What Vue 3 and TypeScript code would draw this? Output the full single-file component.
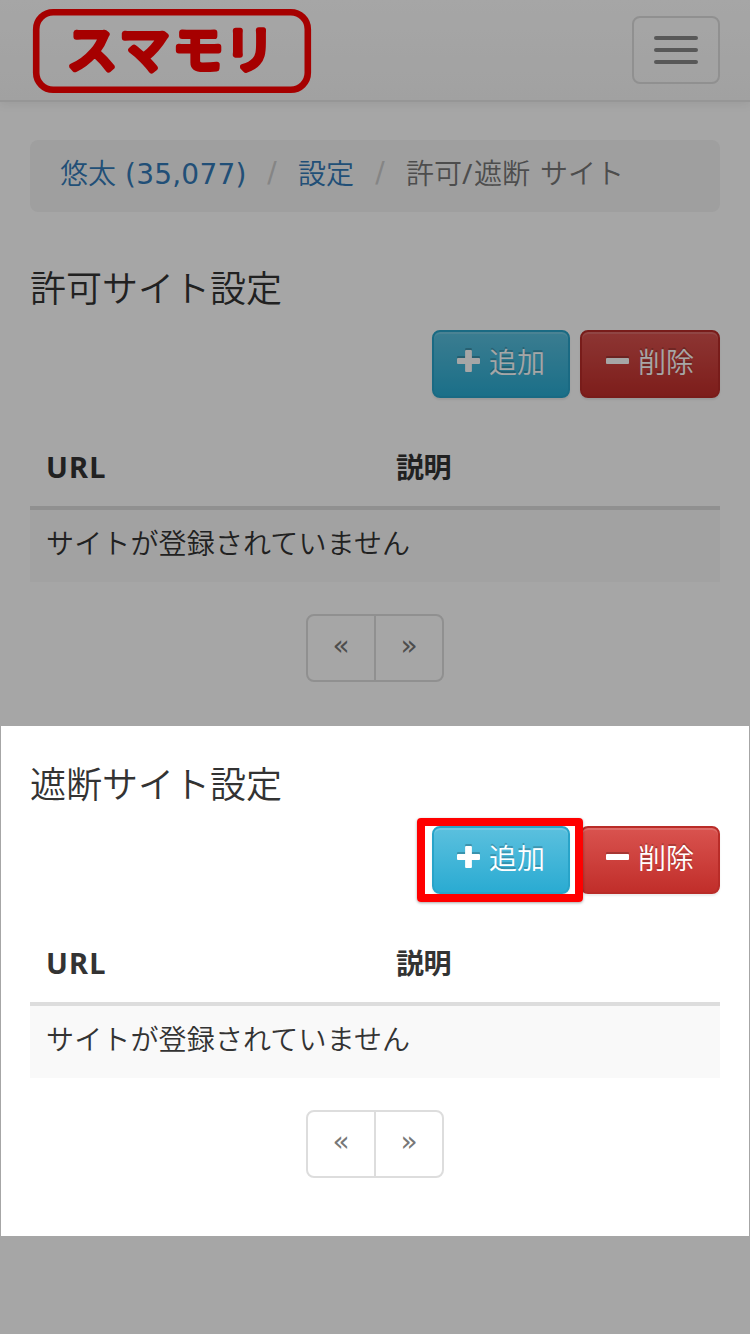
<script setup lang="ts">
interface SiteSection {
  id: string
  title: string
}

const sections: SiteSection[] = [
  { id: 'allow', title: '許可サイト設定' },
  { id: 'block', title: '遮断サイト設定' },
]
</script>

<template>
  <div class="page">
    <header class="navbar">
      <svg class="logo" width="280" height="86" viewBox="0 0 280 86" role="img" aria-label="スマモリ">
        <rect x="4.2" y="4.2" width="271.6" height="77.6" rx="17" fill="none" stroke="#f00" stroke-width="6.6" />
        <text class="logo-text" x="35 87.5 141 192.5" y="60">スマモリ</text>
      </svg>
      <button class="toggle" type="button" aria-label="menu">
        <span class="bar"></span>
        <span class="bar"></span>
        <span class="bar"></span>
      </button>
    </header>

    <nav class="breadcrumb">
      <a class="crumb user">悠太<span class="num"> (35,077)</span></a>
      <span class="sep">/</span>
      <a class="crumb">設定</a>
      <span class="sep">/</span>
      <span class="current">許可<span class="slash">/</span>遮断<span class="gap"> </span>サイト</span>
    </nav>

    <section v-for="s in sections" :key="s.id" class="sites">
      <h2>{{ s.title }}</h2>
      <div class="actions">
        <div class="add-wrap">
          <button class="btn info" type="button">
            <svg class="icon" width="23" height="32" viewBox="0 0 23 32">
              <path class="icon-shade" d="M9.1 3h4.8q1 0 1 1v7H22q1 0 1 1v4q0 1-1 1h-7.1v7q0 1-1 1H9.1q-1 0-1-1v-7H1q-1 0-1-1v-4q0-1 1-1h7.1V4q0-1 1-1z" />
              <path d="M9.1 5h4.8q1 0 1 1v7H22q1 0 1 1v4q0 1-1 1h-7.1v7q0 1-1 1H9.1q-1 0-1-1v-7H1q-1 0-1-1v-4q0-1 1-1h7.1V6q0-1 1-1z" />
            </svg>
            <span>追加</span>
          </button>
          <div v-if="s.id === 'block'" class="marker"></div>
        </div>
        <button class="btn danger" type="button">
          <svg class="icon" width="23" height="32" viewBox="0 0 23 32">
            <rect class="icon-shade" x="0" y="11" width="23" height="6" rx="1" />
            <rect x="0" y="13" width="23" height="6" rx="1" />
          </svg>
          <span>削除</span>
        </button>
      </div>
      <table>
        <thead>
          <tr><th class="url">URL</th><th class="note">説明</th></tr>
        </thead>
        <tbody>
          <tr><td colspan="2">サイトが登録されていません</td></tr>
        </tbody>
      </table>
      <div class="pager">
        <a>«</a>
        <a>»</a>
      </div>
    </section>
    <div class="spotlight"></div>
  </div>
</template>

<style>
body {
  margin: 0;
}
</style>

<style scoped>
* {
  box-sizing: border-box;
}
.page {
  position: relative;
  width: 750px;
  height: 1334px;
  overflow: hidden;
  background: #fff;
  color: #333;
  font-family: "Noto Sans", "Noto Sans CJK JP", sans-serif;
  font-size: 28px;
  font-weight: 350;
  line-height: 40px;
}
.navbar {
  display: flex;
  justify-content: space-between;
  align-items: flex-start;
  height: 102px;
  padding: 8px 30px 0 32px;
  border-bottom: 2px solid #e7e7e7;
  background: linear-gradient(#fff, #f8f8f8);
  box-shadow: 0 2px 10px rgba(0, 0, 0, 0.075);
}
.logo {
  display: block;
}
.logo-text {
  font-family: "Noto Sans CJK JP", sans-serif;
  font-size: 50px;
  font-weight: 350;
  fill: #f00;
  stroke: #f00;
  stroke-width: 6px;
  stroke-linejoin: round;
}
.toggle {
  display: flex;
  flex-direction: column;
  align-items: center;
  justify-content: center;
  gap: 8px;
  width: 88px;
  height: 68px;
  margin-top: 8px;
  padding: 0;
  border: 2px solid #ddd;
  border-radius: 8px;
  background: transparent;
}
.bar {
  width: 44px;
  height: 4px;
  border-radius: 2px;
  background: #888;
}
.breadcrumb {
  display: flex;
  height: 72px;
  margin: 38px 30px 18px;
  padding: 13px 30px;
  border-radius: 8px;
  background: #f5f5f5;
  white-space: pre;
}
.crumb {
  color: #337ab7;
}
.user {
  width: 186px;
}
.num {
  font-family: "DejaVu Sans", sans-serif;
  font-weight: 400;
  letter-spacing: 0.2px;
}
.sep {
  width: 52px;
  text-align: center;
  color: #ccc;
  font-family: "DejaVu Sans", sans-serif;
  font-weight: 400;
}
.current {
  color: #777;
}
.slash,
.gap {
  display: inline-block;
  width: 12px;
}
.slash {
  font-weight: 400;
}
.gap {
  width: 10px;
}
.sites {
  height: 496px;
  padding: 38px 30px 0;
}
h2 {
  margin: -1px 0 19px;
  font-size: 36px;
  font-weight: 350;
  line-height: 44px;
}
.actions {
  display: flex;
  justify-content: flex-end;
  gap: 10px;
}
.add-wrap {
  position: relative;
}
.btn {
  display: flex;
  gap: 9px;
  width: 138px;
  height: 68px;
  padding: 10px 0 0 23px;
  border: 2px solid #28a4c9;
  border-radius: 8px;
  color: #fff;
  font: inherit;
  line-height: 40px;
  text-shadow: 0 -2px 0 rgba(0, 0, 0, 0.2);
  box-shadow: inset 0 2px 0 rgba(255, 255, 255, 0.15), 0 2px 2px rgba(0, 0, 0, 0.075);
}
.info {
  background: linear-gradient(#5bc0de, #2aabd2);
}
.danger {
  width: 140px;
  padding-left: 24px;
  border-color: #b92c28;
  background: linear-gradient(#d9534f, #c12e2a);
}
.icon {
  flex: none;
  margin-top: 3px;
  fill: #fff;
}
.icon-shade {
  fill: rgba(0, 0, 0, 0.2);
}
.marker {
  position: absolute;
  z-index: 1;
  left: -15px;
  top: -8px;
  width: 166px;
  height: 84px;
  border: 8px solid #f00;
  border-radius: 4px;
  box-shadow: 0 1px 3px rgba(0, 0, 0, 0.35);
}
table {
  width: 100%;
  margin-top: 34px;
  border-collapse: separate;
  border-spacing: 0;
  table-layout: fixed;
}
th {
  height: 78px;
  padding: 15px 16px 19px;
  border-bottom: 4px solid #ddd;
  text-align: left;
}
.url {
  width: 350px;
  font-size: 29px;
  letter-spacing: 1.1px;
}
.note {
  letter-spacing: -0.4px;
}
td {
  height: 72px;
  padding: 13px 16px 19px;
  background: #f9f9f9;
  letter-spacing: 0.15px;
}
.pager {
  display: flex;
  width: 138px;
  height: 68px;
  margin: 32px auto 0;
  border: 2px solid #ddd;
  border-radius: 8px;
}
.pager a {
  flex: 1;
  padding-top: 10px;
  text-align: center;
  color: #777;
  font-family: "DejaVu Sans", sans-serif;
  font-weight: 400;
}
.pager a + a {
  border-left: 2px solid #ddd;
}
.spotlight {
  position: absolute;
  left: 1px;
  top: 726px;
  width: 748px;
  height: 510px;
  box-shadow: 0 0 0 1400px rgba(0, 0, 0, 0.35);
  pointer-events: none;
}
</style>
